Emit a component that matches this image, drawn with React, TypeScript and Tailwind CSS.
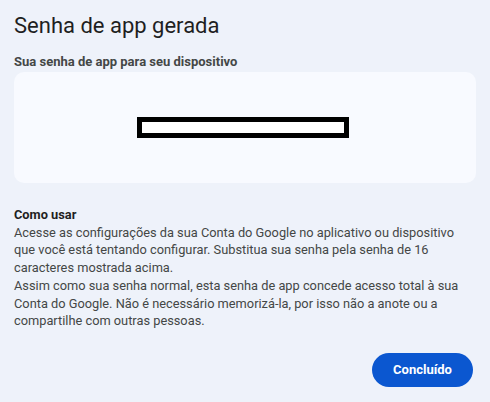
export default function App() {
  return (
    <div className="h-[402px] w-[490px] overflow-hidden bg-[#eef2fa] px-[14px] pt-[12px] font-['Roboto',sans-serif] text-[#444746]">
      <h1 className="text-[22px] leading-[28px] font-normal text-[#1f1f1f]">Senha de app gerada</h1>

      <div className="mt-[14px] text-[13px] leading-[16px] font-bold">Sua senha de app para seu dispositivo</div>

      <div className="mt-[2px] flex h-[111px] items-center justify-center rounded-[10px] bg-[#f8faff]">
        <div className="ml-[-4px] h-[21px] w-[212px] border-[5px] border-black bg-white" />
      </div>

      <div className="mt-[23px] text-[12.8px] leading-[17.7px]">
        <div className="font-bold text-[#1f1f1f]">Como usar</div>
        <p>
          Acesse as configurações da sua Conta do Google no aplicativo ou dispositivo que você está tentando
          configurar. Substitua sua senha pela senha de 16 caracteres mostrada acima.
        </p>
        <p>
          Assim como sua senha normal, esta senha de app concede acesso total à sua Conta do Google. Não é
          necessário memorizá-la, por isso não a anote ou a compartilhe com outras pessoas.
        </p>
      </div>

      <div className="mt-[23px] flex justify-end pr-[3px]">
        <button className="h-[34px] w-[101px] rounded-full bg-[#0b57d0] text-[13px] font-bold text-white">
          Concluído
        </button>
      </div>
    </div>
  )
}
